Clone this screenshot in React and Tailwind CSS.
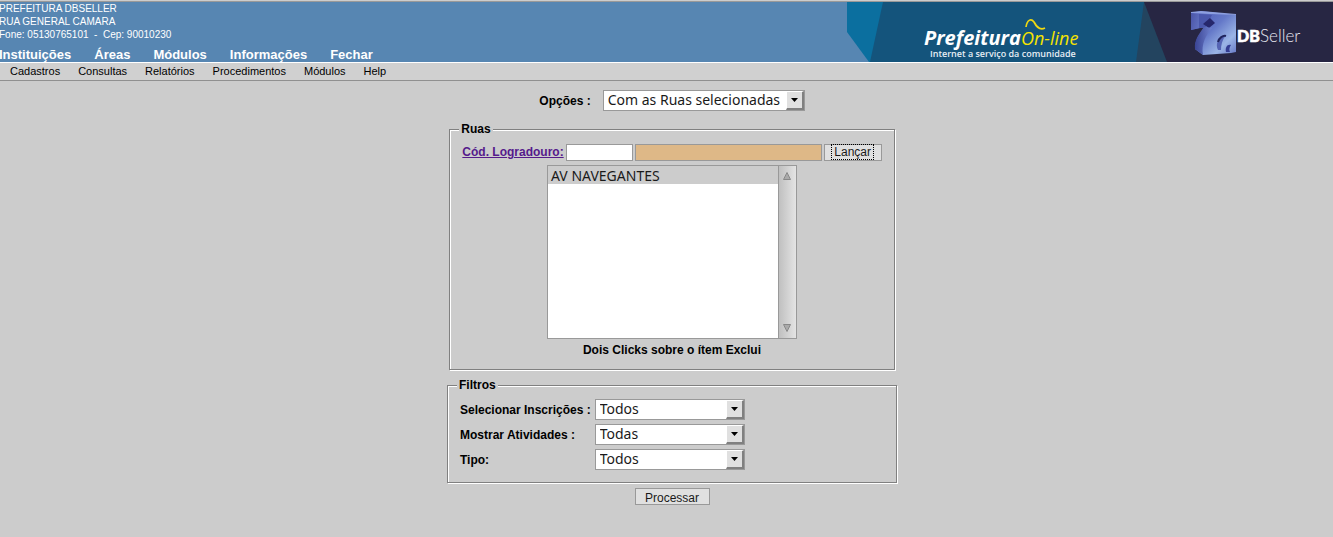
import React from "react";

const areas = ["Instituições", "Áreas", "Módulos", "Informações", "Fechar"];
const menus = ["Cadastros", "Consultas", "Relatórios", "Procedimentos", "Módulos", "Help"];

const filters = [
  { id: "inscricoes", label: "Selecionar Inscrições :", options: ["Todos", "Ativas", "Baixadas"] },
  { id: "atividades", label: "Mostrar Atividades :", options: ["Todas", "Principal"] },
  { id: "tipo", label: "Tipo:", options: ["Todos", "Completo"] },
];

function Banner() {
  return (
    <svg className="block h-[60px] w-[486px] shrink-0" viewBox="0 0 486 60" role="img" aria-label="Prefeitura On-line, DBSeller">
      <defs>
        <linearGradient id="front" x1="0" y1="0" x2="1" y2="1">
          <stop offset="0" stopColor="#4a55b4" />
          <stop offset="0.45" stopColor="#6478c8" />
          <stop offset="0.75" stopColor="#9bb5e6" />
          <stop offset="1" stopColor="#6376c4" />
        </linearGradient>
        <linearGradient id="block" x1="0" y1="0" x2="1" y2="0.6">
          <stop offset="0" stopColor="#4a54a6" />
          <stop offset="1" stopColor="#5f6ebe" />
        </linearGradient>
        <linearGradient id="side" x1="0" y1="0" x2="1" y2="0">
          <stop offset="0" stopColor="#3a4494" />
          <stop offset="1" stopColor="#6e80cd" />
        </linearGradient>
      </defs>
      <path d="M0 0H37L24 60H22L0 30Z" fill="#0b6f9f" />
      <path d="M36 0H298L290 60H23Z" fill="#14547c" />
      <path d="M297 0H300L322 60H289Z" fill="#23445f" />
      <path d="M297 0H486V60H320Z" fill="#272643" />
      <text x="77" y="43" fill="#fff" fontSize="20" fontWeight="700" fontStyle="italic" className="font-['Open_Sans',sans-serif]">Prefeitura</text>
      <text x="174" y="43" fill="#f5e300" fontSize="18" fontStyle="italic" className="font-['Open_Sans',sans-serif]">On-line</text>
      <path d="M179 25C180 18 184 16 187 20C190 26 194 28 198 26" fill="none" stroke="#f0d810" strokeWidth="1.7" />
      <text x="83" y="55" fill="#e6eef4" fontSize="9" fontWeight="600" className="font-['Open_Sans',sans-serif]">Internet a serviço da comunidade</text>
      <path d="M344 11L354 9L389 13V50L384 51L356 53L348 47C348 38 352 32 358 25L344 28Z" fill="url(#front)" />
      <path d="M344 11L352 12V26L344 28Z" fill="url(#block)" />
      <path d="M352 12L365 13L358 26L352 26Z" fill="#4a57ac" />
      <path d="M344 10L354 9L389 12V13L363 12L344 11Z" fill="#8d9fe0" />
      <path d="M363 16L368 21L362 26L356 22Z" fill="#26276c" />
      <path d="M357 25C352 32 347 38 348 47L356 53C354 42 359 33 365 26Z" fill="url(#side)" />
      <path d="M371 48C368 42 371 35 379 33C375 38 374 43 374 48Z" fill="#5564b4" />
      <path d="M371 40C372 36 376 33 379 34" fill="none" stroke="#20245c" strokeWidth="2" />
      <path d="M379 50C378 46 380 42 384 43C382 46 382 48 383 50Z" fill="#343d92" />
      <text x="390" y="40" fill="#fff" stroke="#fff" strokeWidth="0.6" fontSize="16" fontWeight="900" className="font-[Lato,sans-serif]">DB</text>
      <text x="413" y="40" fill="#e8e8f0" fontSize="17" fontWeight="300" className="font-[Lato,sans-serif]">Seller</text>
    </svg>
  );
}

function Dropdown({ id, options, className }) {
  return (
    <div className={`relative h-[21px] border border-[#999] bg-white ${className}`}>
      <select
        id={id}
        className="block h-full w-full appearance-none bg-transparent pr-5 pb-0.5 pl-1 font-['Noto_Sans',sans-serif] text-[14px] leading-[17px] text-[#1a1a1a] outline-none"
      >
        {options.map((option) => (
          <option key={option}>{option}</option>
        ))}
      </select>
      <span className="pointer-events-none absolute inset-y-0 right-0 flex w-[18px] items-center justify-center border-t border-r-2 border-b-2 border-l border-t-white border-r-[#808080] border-b-[#808080] border-l-white bg-[#e0e0e0]">
        <svg className="h-[4px] w-[7px]" viewBox="0 0 7 4" aria-hidden="true">
          <path d="M0 0H7L3.500 4Z" fill="#000" />
        </svg>
      </span>
    </div>
  );
}

function Group({ title, className, children }) {
  return (
    <fieldset className={`border border-[#808080] px-3 pt-[7px] pb-3 shadow-[1px_1px_0_#fff,inset_1px_1px_0_#fff] ${className}`}>
      <legend className="-ml-[3px] bg-[#ccc] px-0.5 font-bold">{title}</legend>
      {children}
    </fieldset>
  );
}

export default function App() {
  return (
    <div className="min-h-screen bg-[#ccc] pt-px font-['Liberation_Sans',Arial,sans-serif] text-[12px] leading-[14px] text-black">
      <header className="border-t border-b border-t-[#999] border-b-white bg-[#5786b2] text-white">
        <div className="flex h-[60px] justify-between overflow-hidden">
          <div className="-ml-px flex flex-col justify-between">
            <address className="text-[10px] leading-[13px] whitespace-pre not-italic">
              <p>PREFEITURA DBSELLER</p>
              <p>RUA GENERAL CAMARA</p>
              <p>{"Fone: 05130765101  -  Cep: 90010230"}</p>
            </address>
            <nav className="flex gap-[23px] text-[13px] leading-[15px] font-bold">
              {areas.map((item) => (
                <a key={item} href="#">{item}</a>
              ))}
            </nav>
          </div>
          <Banner />
        </div>
      </header>
      <nav className="flex h-[18px] gap-[18px] border-b border-[#909090] bg-[#d0d0d0] pl-2.5 text-[11px] leading-[17px]">
        {menus.map((item) => (
          <a key={item} href="#">{item}</a>
        ))}
      </nav>

      <form className="flex flex-col items-center pt-[9px] pl-[11px]" onSubmit={(e) => e.preventDefault()}>
        <div className="flex items-center gap-3">
          <label htmlFor="opcoes" className="font-bold">Opções :</label>
          <Dropdown id="opcoes" className="w-[202px]" options={["Com as Ruas selecionadas", "Sem as Ruas selecionadas"]} />
        </div>

        <Group title="Ruas" className="mt-[11px]">
          <div className="flex h-[18px] items-center gap-0.5">
            <a href="#" id="codigo-label" className="font-bold text-[#551a8b] underline">Cód. Logradouro:</a>
            <input aria-labelledby="codigo-label" className="h-[17px] w-[67px] border border-[#999] bg-white px-1 outline-none" />
            <input aria-label="Nome do logradouro" readOnly className="h-[17px] w-[187px] border border-[#999] bg-[#deb887] px-1 outline-none" />
            <button type="button" className="flex h-[17px] w-[58px] items-center justify-center border border-[#999] bg-[#e0e0e0] text-[#1a1a1a]">
              <span className="border border-dotted border-black px-0.5 leading-[14px]">Lançar</span>
            </button>
          </div>
          <div className="mx-auto mt-1 flex h-[174px] w-[250px] border border-[#999] bg-white">
            <select
              aria-label="Ruas selecionadas"
              multiple
              defaultValue={["AV NAVEGANTES"]}
              className="min-w-0 flex-1 appearance-none overflow-hidden bg-white font-['Noto_Sans',sans-serif] text-[14px] outline-none"
            >
              <option className="h-[18px] min-h-0 bg-[#ccc] px-[3px] py-0 leading-[16px] text-[#1a1a1a]">AV NAVEGANTES</option>
            </select>
            <div className="flex w-[18px] flex-col items-center justify-between border-l border-[#999] bg-linear-to-r from-[#c0c0c0] to-[#e4e4e4] py-1.5" aria-hidden="true">
              <svg className="h-2 w-2" viewBox="0 0 8 8">
                <path d="M4 0.500L7.500 7.500H0.500Z" fill="#aaa" stroke="#888" />
              </svg>
              <svg className="h-2 w-2" viewBox="0 0 8 8">
                <path d="M0.500 0.500H7.500L4 7.500Z" fill="#aaa" stroke="#888" />
              </svg>
            </div>
          </div>
          <p className="mt-1 text-center font-bold">Dois Clicks sobre o ítem Exclui</p>
        </Group>

        <Group title="Filtros" className="mt-2 w-[450px]">
          <div className="grid grid-cols-[auto_1fr] items-center gap-1">
            {filters.map(({ id, label, options }) => (
              <React.Fragment key={id}>
                <label htmlFor={id} className="font-bold">{label}</label>
                <Dropdown id={id} className="w-[150px]" options={options} />
              </React.Fragment>
            ))}
          </div>
        </Group>

        <button type="submit" className="mt-[5px] h-[17px] w-[75px] border border-[#999] bg-[#e0e0e0] pt-0.5 leading-[14px] text-[#1a1a1a]">Processar</button>
      </form>
    </div>
  );
}
